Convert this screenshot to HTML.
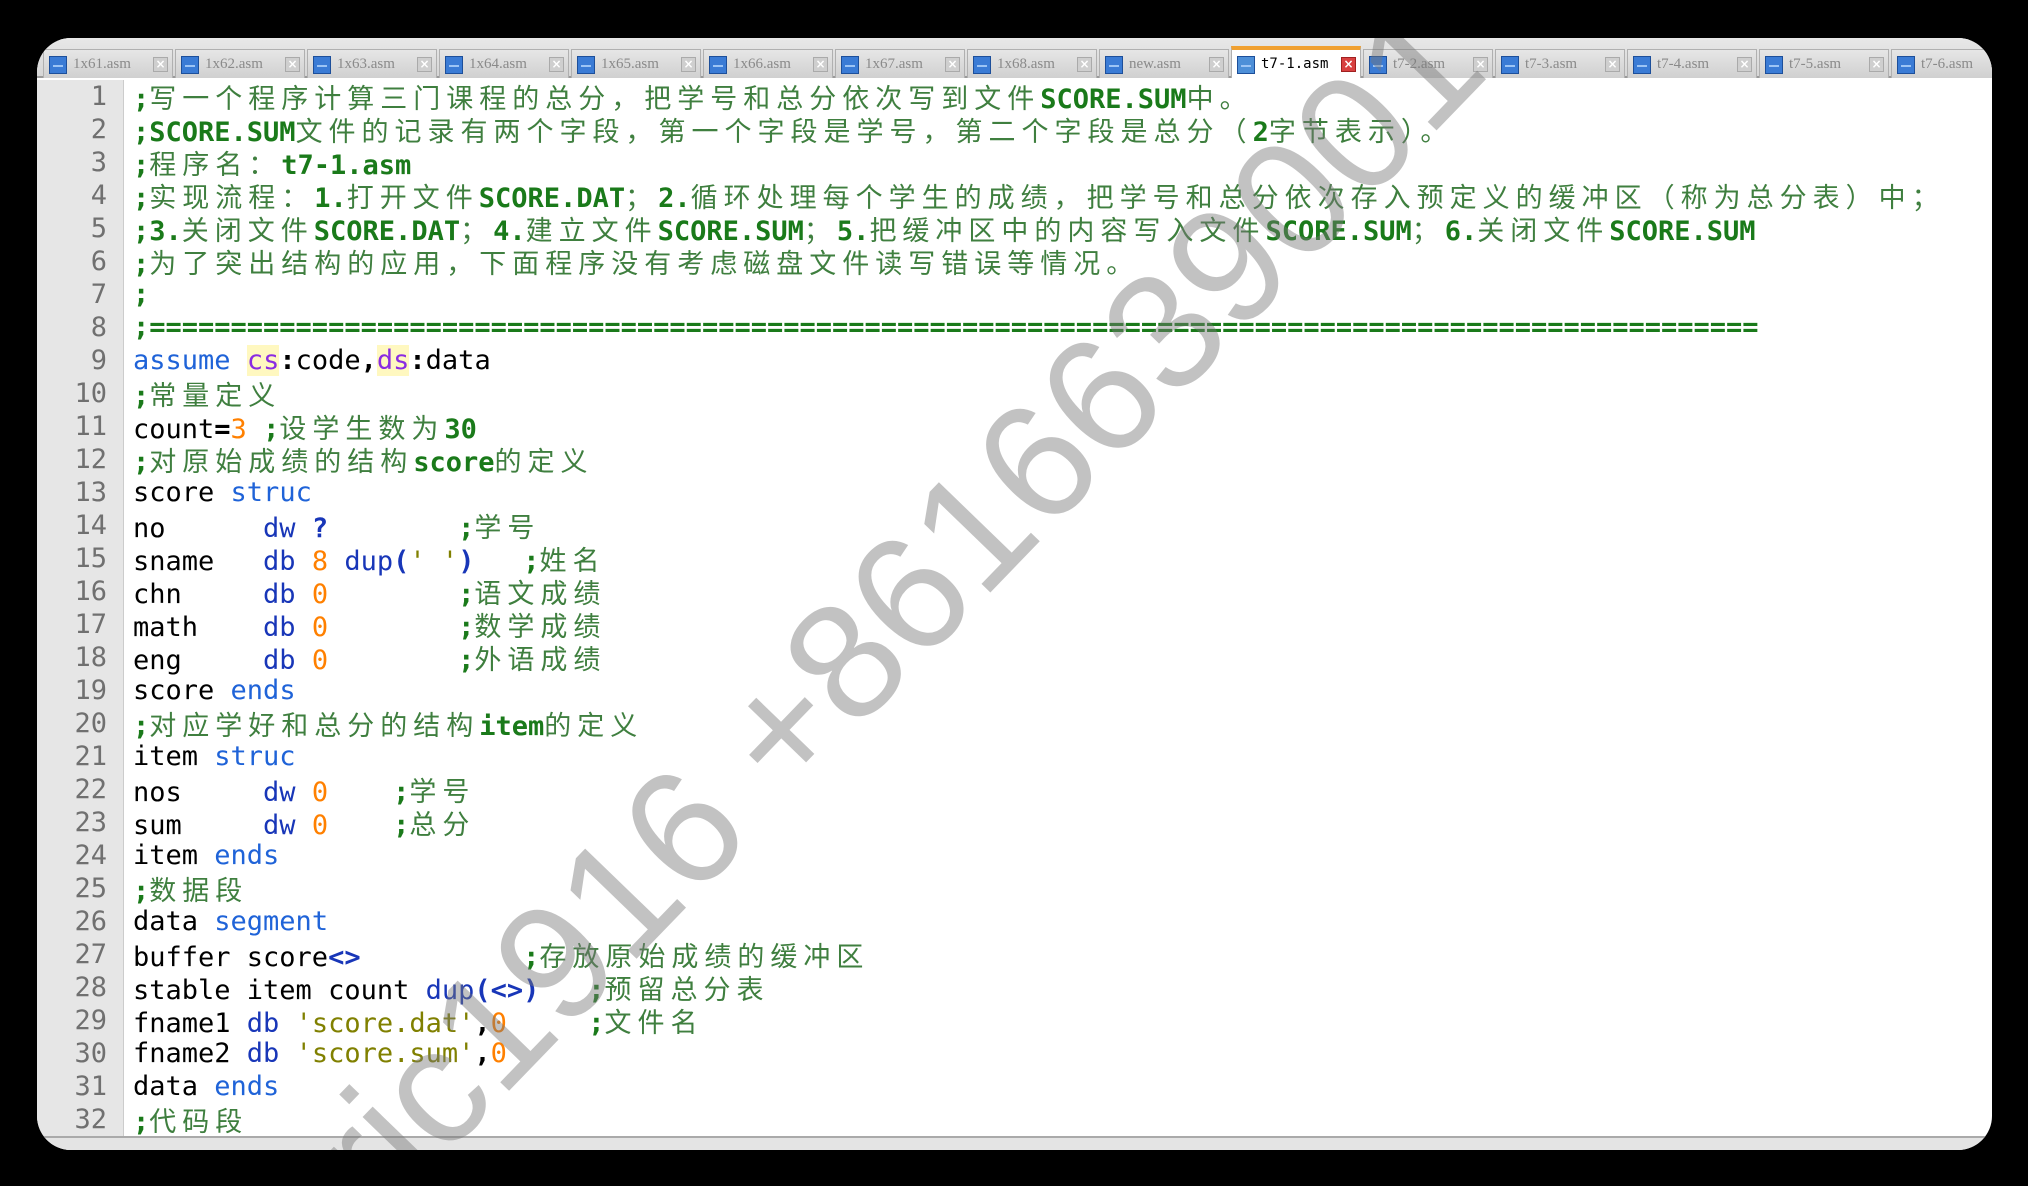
<!DOCTYPE html>
<html><head><meta charset="utf-8"><style>
*{margin:0;padding:0;box-sizing:border-box}
html,body{width:2028px;height:1186px;overflow:hidden}
body{background:#000;position:relative;font-family:"DejaVu Sans Mono","Liberation Mono","Noto Sans CJK SC",monospace}
#win{position:absolute;left:37px;top:38px;width:1955px;height:1112px;background:#fff;border-radius:34px;overflow:hidden}
#tabbar{position:absolute;left:0;top:0;width:100%;height:40px;background:linear-gradient(#e8e8e8,#d6d6d6);border-bottom:2px solid #9a9a9a}
.tab{position:absolute;top:11px;height:29px;width:130px;background:linear-gradient(#e6e6e6,#d0d0d0);border:1px solid #b0b0b0;border-bottom:none;font:15px "Liberation Serif","DejaVu Serif",serif;color:#8a8a8a;white-space:nowrap;overflow:hidden}
.tab .ic{position:absolute;left:5px;top:6px;width:18px;height:18px;background:#3a7bd5;border:1px solid #1d4f9a}
.tab .ic:after{content:"";position:absolute;left:3px;top:8px;width:10px;height:2px;background:#9cc4f5}
.tab .t{position:absolute;left:29px;top:6px}
.tab .x{position:absolute;right:4px;top:7px;width:15px;height:15px;background:#cfcfcf;border:1px solid #aaa;color:#fff;font:bold 12px "DejaVu Sans";line-height:13px;text-align:center}
.tab.act{background:#fff;color:#000;font-family:"DejaVu Sans Mono",monospace;font-size:14px;border-top:4px solid #f0a030;top:8px;height:32px}
.tab.act .x{background:#d84040;border-color:#a02020}
.tab.act .ic{background:#4d8fd8}
#gut{position:absolute;left:0;top:42px;width:87px;bottom:0;background:#e6e6e6;border-right:1px solid #ccc}
#ed{position:absolute;left:0;top:42px;right:0;bottom:0}
.ln{position:absolute;left:0;width:1955px;height:33px;line-height:33px;font-size:27px;white-space:pre;color:#000}
.n{position:absolute;left:0;width:70px;text-align:right;color:#707070}
.c{position:absolute;left:96px}
.g{color:#1a7a1a;font-weight:bold}
.k{letter-spacing:6px;font-family:"Noto Sans CJK SC",sans-serif;font-weight:normal;color:#3f7f3f}
.kb{color:#1f63d8}
.kd{color:#1836b8}
.nm{color:#ff8000}
.s{color:#808000}
.p{color:#8a2be2;background:#fff8c0}
.b{font-weight:bold}
#bot{position:absolute;left:0;bottom:0;width:100%;height:14px;background:#e4e4e4;border-top:2px solid #aaa}
#wm{position:absolute;left:826px;top:605px;transform:translate(-50%,-50%) rotate(-46deg);font:165px "Liberation Sans",sans-serif;color:rgba(120,120,120,0.45);white-space:nowrap}
</style></head><body>
<div id="win">
<div id="tabbar">
<div class="tab" style="left:6px"><div class="ic"></div><span class="t">1x61.asm</span><div class="x">×</div></div>
<div class="tab" style="left:138px"><div class="ic"></div><span class="t">1x62.asm</span><div class="x">×</div></div>
<div class="tab" style="left:270px"><div class="ic"></div><span class="t">1x63.asm</span><div class="x">×</div></div>
<div class="tab" style="left:402px"><div class="ic"></div><span class="t">1x64.asm</span><div class="x">×</div></div>
<div class="tab" style="left:534px"><div class="ic"></div><span class="t">1x65.asm</span><div class="x">×</div></div>
<div class="tab" style="left:666px"><div class="ic"></div><span class="t">1x66.asm</span><div class="x">×</div></div>
<div class="tab" style="left:798px"><div class="ic"></div><span class="t">1x67.asm</span><div class="x">×</div></div>
<div class="tab" style="left:930px"><div class="ic"></div><span class="t">1x68.asm</span><div class="x">×</div></div>
<div class="tab" style="left:1062px"><div class="ic"></div><span class="t">new.asm</span><div class="x">×</div></div>
<div class="tab act" style="left:1194px"><div class="ic"></div><span class="t">t7-1.asm</span><div class="x">×</div></div>
<div class="tab" style="left:1326px"><div class="ic"></div><span class="t">t7-2.asm</span><div class="x">×</div></div>
<div class="tab" style="left:1458px"><div class="ic"></div><span class="t">t7-3.asm</span><div class="x">×</div></div>
<div class="tab" style="left:1590px"><div class="ic"></div><span class="t">t7-4.asm</span><div class="x">×</div></div>
<div class="tab" style="left:1722px"><div class="ic"></div><span class="t">t7-5.asm</span><div class="x">×</div></div>
<div class="tab" style="left:1854px"><div class="ic"></div><span class="t">t7-6.asm</span><div class="x">×</div></div>
</div>
<div id="gut"></div>
<div id="ed">
<div class="ln" style="top:0"><span class="n">1</span><span class="c g">;<span class="k">写一个程序计算三门课程的总分，把学号和总分依次写到文件</span>SCORE.SUM<span class="k">中。</span></span></div>
<div class="ln" style="top:33px"><span class="n">2</span><span class="c g">;SCORE.SUM<span class="k">文件的记录有两个字段，第一个字段是学号，第二个字段是总分（</span>2<span class="k">字节表示）。</span></span></div>
<div class="ln" style="top:66px"><span class="n">3</span><span class="c g">;<span class="k">程序名：</span>t7-1.asm</span></div>
<div class="ln" style="top:99px"><span class="n">4</span><span class="c g">;<span class="k">实现流程：</span>1.<span class="k">打开文件</span>SCORE.DAT<span class="k">；</span>2.<span class="k">循环处理每个学生的成绩，把学号和总分依次存入预定义的缓冲区（称为总分表）中；</span></span></div>
<div class="ln" style="top:132px"><span class="n">5</span><span class="c g">;3.<span class="k">关闭文件</span>SCORE.DAT<span class="k">；</span>4.<span class="k">建立文件</span>SCORE.SUM<span class="k">；</span>5.<span class="k">把缓冲区中的内容写入文件</span>SCORE.SUM<span class="k">；</span>6.<span class="k">关闭文件</span>SCORE.SUM</span></div>
<div class="ln" style="top:165px"><span class="n">6</span><span class="c g">;<span class="k">为了突出结构的应用，下面程序没有考虑磁盘文件读写错误等情况。</span></span></div>
<div class="ln" style="top:198px"><span class="n">7</span><span class="c g">;</span></div>
<div class="ln" style="top:231px"><span class="n">8</span><span class="c g">;===================================================================================================</span></div>
<div class="ln" style="top:264px"><span class="n">9</span><span class="c"><span class="kb">assume</span> <span class="p">cs</span><span class="b">:</span>code<span class="b">,</span><span class="p">ds</span><span class="b">:</span>data</span></div>
<div class="ln" style="top:297px"><span class="n">10</span><span class="c g">;<span class="k">常量定义</span></span></div>
<div class="ln" style="top:330px"><span class="n">11</span><span class="c">count<span class="b">=</span><span class="nm">3</span> <span class="g">;<span class="k">设学生数为</span>30</span></span></div>
<div class="ln" style="top:363px"><span class="n">12</span><span class="c g">;<span class="k">对原始成绩的结构</span>score<span class="k">的定义</span></span></div>
<div class="ln" style="top:396px"><span class="n">13</span><span class="c">score <span class="kb">struc</span></span></div>
<div class="ln" style="top:429px"><span class="n">14</span><span class="c">no      <span class="kd">dw</span> <span class="kd b">?</span>        <span class="g">;<span class="k">学号</span></span></span></div>
<div class="ln" style="top:462px"><span class="n">15</span><span class="c">sname   <span class="kd">db</span> <span class="nm">8</span> <span class="kd">dup</span><span class="kd b">(</span><span class="s">' '</span><span class="kd b">)</span>   <span class="g">;<span class="k">姓名</span></span></span></div>
<div class="ln" style="top:495px"><span class="n">16</span><span class="c">chn     <span class="kd">db</span> <span class="nm">0</span>        <span class="g">;<span class="k">语文成绩</span></span></span></div>
<div class="ln" style="top:528px"><span class="n">17</span><span class="c">math    <span class="kd">db</span> <span class="nm">0</span>        <span class="g">;<span class="k">数学成绩</span></span></span></div>
<div class="ln" style="top:561px"><span class="n">18</span><span class="c">eng     <span class="kd">db</span> <span class="nm">0</span>        <span class="g">;<span class="k">外语成绩</span></span></span></div>
<div class="ln" style="top:594px"><span class="n">19</span><span class="c">score <span class="kb">ends</span></span></div>
<div class="ln" style="top:627px"><span class="n">20</span><span class="c g">;<span class="k">对应学好和总分的结构</span>item<span class="k">的定义</span></span></div>
<div class="ln" style="top:660px"><span class="n">21</span><span class="c">item <span class="kb">struc</span></span></div>
<div class="ln" style="top:693px"><span class="n">22</span><span class="c">nos     <span class="kd">dw</span> <span class="nm">0</span>    <span class="g">;<span class="k">学号</span></span></span></div>
<div class="ln" style="top:726px"><span class="n">23</span><span class="c">sum     <span class="kd">dw</span> <span class="nm">0</span>    <span class="g">;<span class="k">总分</span></span></span></div>
<div class="ln" style="top:759px"><span class="n">24</span><span class="c">item <span class="kb">ends</span></span></div>
<div class="ln" style="top:792px"><span class="n">25</span><span class="c g">;<span class="k">数据段</span></span></div>
<div class="ln" style="top:825px"><span class="n">26</span><span class="c">data <span class="kb">segment</span></span></div>
<div class="ln" style="top:858px"><span class="n">27</span><span class="c">buffer score<span class="kd b">&lt;&gt;</span>          <span class="g">;<span class="k">存放原始成绩的缓冲区</span></span></span></div>
<div class="ln" style="top:891px"><span class="n">28</span><span class="c">stable item count <span class="kd">dup</span><span class="kd b">(&lt;&gt;)</span>   <span class="g">;<span class="k">预留总分表</span></span></span></div>
<div class="ln" style="top:924px"><span class="n">29</span><span class="c">fname1 <span class="kd">db</span> <span class="s">'score.dat'</span><span class="b">,</span><span class="nm">0</span>     <span class="g">;<span class="k">文件名</span></span></span></div>
<div class="ln" style="top:957px"><span class="n">30</span><span class="c">fname2 <span class="kd">db</span> <span class="s">'score.sum'</span><span class="b">,</span><span class="nm">0</span></span></div>
<div class="ln" style="top:990px"><span class="n">31</span><span class="c">data <span class="kb">ends</span></span></div>
<div class="ln" style="top:1023px"><span class="n">32</span><span class="c g">;<span class="k">代码段</span></span></div>
</div>
<div id="bot"></div>
<div id="wm">eric1916 +8616639001</div>
</div>
</body></html>
